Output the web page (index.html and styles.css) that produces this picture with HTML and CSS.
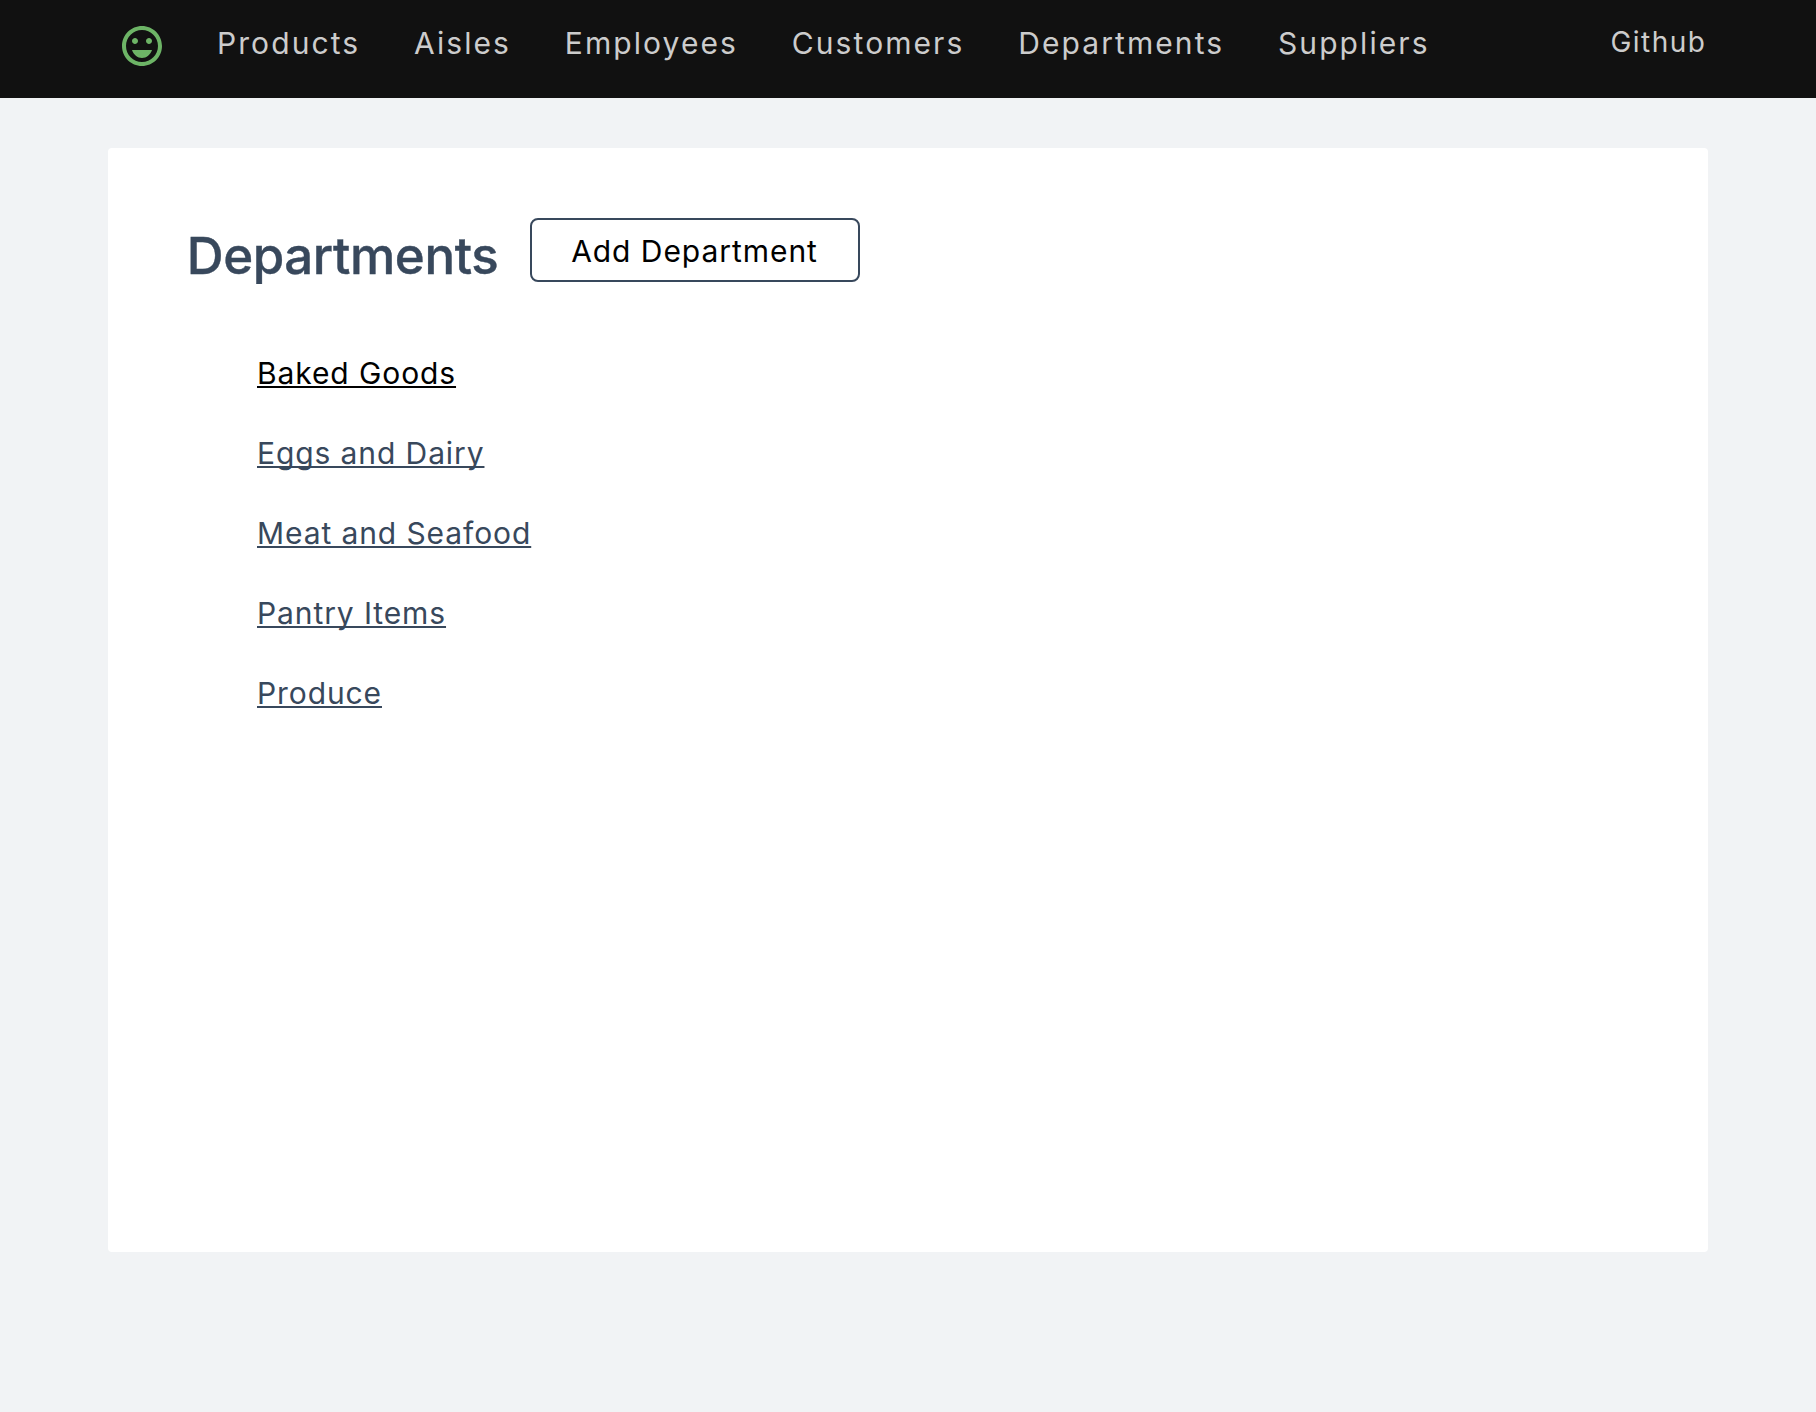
FILE: index.html
```html
<!DOCTYPE html>
<html lang="en">
<head>
<meta charset="utf-8">
<title>Departments</title>
<link rel="stylesheet" href="styles.css">
</head>
<body>
<header class="navbar">
  <nav class="navbar-inner">
    <a class="logo" href="#" aria-label="Home">
      <svg viewBox="0 0 24 24" width="48" height="48" fill="currentColor"><path d="M11.99 2C6.47 2 2 6.48 2 12s4.47 10 9.99 10C17.52 22 22 17.52 22 12S17.52 2 11.99 2zM12 20c-4.42 0-8-3.58-8-8s3.58-8 8-8 8 3.58 8 8-3.58 8-8 8zm3.5-9c.83 0 1.5-.67 1.5-1.5S16.33 8 15.5 8 14 8.67 14 9.5s.67 1.5 1.5 1.5zm-7 0c.83 0 1.5-.67 1.5-1.5S9.33 8 8.5 8 7 8.67 7 9.5 7.67 11 8.5 11zM12 18c2.28 0 4.22-1.66 5-4H7c.78 2.34 2.72 4 5 4z"/></svg>
    </a>
    <ul class="nav-links">
      <li><a href="#">Products</a></li>
      <li><a href="#">Aisles</a></li>
      <li><a href="#">Employees</a></li>
      <li><a href="#">Customers</a></li>
      <li><a href="#">Departments</a></li>
      <li><a href="#">Suppliers</a></li>
    </ul>
    <a class="github" href="#">Github</a>
  </nav>
</header>
<main class="card">
  <div class="card-header">
    <h1>Departments</h1>
    <button class="add-button" type="button">Add Department</button>
  </div>
  <ul class="departments">
    <li><a class="active" href="#">Baked Goods</a></li>
    <li><a href="#">Eggs and Dairy</a></li>
    <li><a href="#">Meat and Seafood</a></li>
    <li><a href="#">Pantry Items</a></li>
    <li><a href="#">Produce</a></li>
  </ul>
</main>
</body>
</html>
```
FILE: styles.css
```css
* { box-sizing: border-box; }

body {
  margin: 0;
  min-height: 100vh;
  background: #f1f3f5;
  color: #38485c;
  font-family: Inter, "Liberation Sans", sans-serif;
  font-size: 30px;
}

ul { list-style: none; margin: 0; padding: 0; }

.navbar { height: 98px; background: #111; }

.navbar-inner {
  display: flex;
  align-items: flex-start;
  width: 1600px;
  margin: 0 auto;
  padding: 22px 1.5px 0 10px;
}

.navbar a { color: #ccc; text-decoration: none; }
.navbar .logo { height: 48px; color: #6db466; }
.logo svg { display: block; }

.nav-links {
  display: flex;
  gap: 53.8px;
  margin-left: 51px;
  line-height: 42px;
  letter-spacing: 2.08px;
}

.github {
  margin-left: auto;
  font-size: 28px;
  line-height: 41px;
  letter-spacing: 1.5px;
}

.card {
  width: 1600px;
  height: 1104px;
  margin: 50px auto 0;
  padding: 70px 78px;
  background: #fff;
  border-radius: 4px;
}

.card-header { display: flex; }

h1 {
  margin: 0;
  padding-left: 0.8px;
  width: 344px;
  font-size: 51px;
  font-weight: 500;
  line-height: 76px;
  letter-spacing: -0.42px;
  white-space: nowrap;
  -webkit-text-stroke: 0.4px currentColor;
}

.add-button {
  width: 330px;
  height: 64px;
  padding: 2px 1px 0 0;
  border: 2px solid #38485c;
  border-radius: 8px;
  background: #fff;
  color: #000;
  font: inherit;
  letter-spacing: 0.95px;
}

.departments {
  margin: 39px 0 0 71px;
  line-height: 80px;
  letter-spacing: 0.9px;
}

.departments a {
  color: inherit;
  text-decoration: underline;
  text-decoration-thickness: 2px;
  text-decoration-skip-ink: none;
  text-underline-offset: 2px;
}

.departments .active { color: #000; }
```
